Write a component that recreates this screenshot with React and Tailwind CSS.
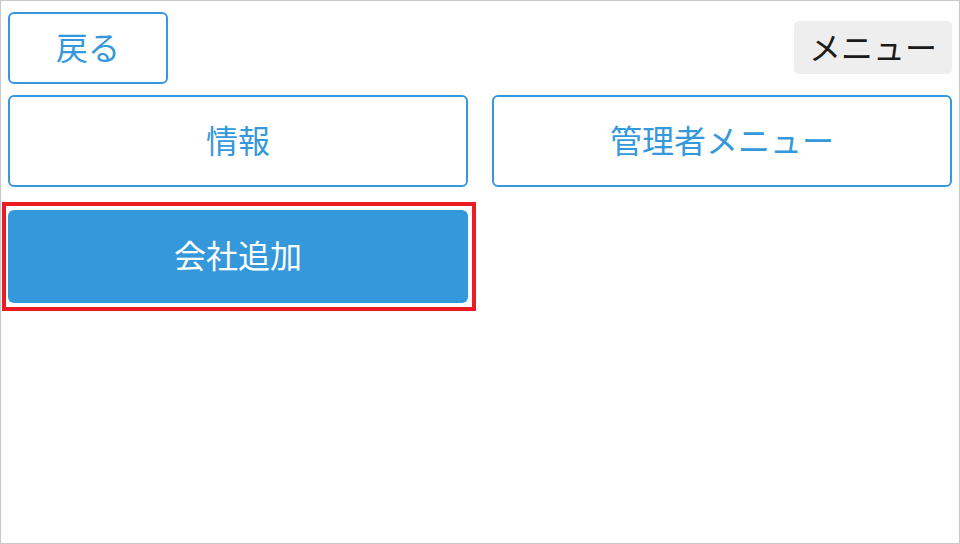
export default function App() {
  const font = { fontFamily: '"Noto Sans CJK JP", "Noto Sans", sans-serif' };
  return (
    <div className="w-[960px] h-[544px] border border-[#c8c8c8] bg-white box-border overflow-hidden" style={font}>
      <div className="flex flex-col px-[7px] pt-[11px]">
        <div className="flex items-start justify-between">
          <button className="w-[160px] h-[72px] pb-[5px] border-2 border-[#3498db] rounded-[6px] text-[#3498db] text-[32px] flex items-center justify-center bg-white">
            戻る
          </button>
          <button className="mt-[9px] w-[158px] h-[53px] pb-[4px] bg-[#eeeeee] rounded-[5px] text-[#1a1a1a] text-[32px] flex items-center justify-center">
            メニュー
          </button>
        </div>
        <div className="mt-[11px] grid grid-cols-2 gap-[24px]">
          <button className="h-[92px] pb-[5px] border-2 border-[#3498db] rounded-[6px] text-[#3498db] text-[32px] flex items-center justify-center bg-white">
            情報
          </button>
          <button className="h-[92px] pb-[5px] border-2 border-[#3498db] rounded-[6px] text-[#3498db] text-[32px] flex items-center justify-center bg-white">
            管理者メニュー
          </button>
        </div>
        <div className="mt-[15px] ml-[-6px] w-[474px] border-4 border-[#ed1c24] pl-[2px] pr-[4px] pt-[4px] pb-[4px]">
          <button className="w-full h-[93px] pb-[5px] bg-[#3498db] rounded-[6px] text-white text-[32px] flex items-center justify-center">
            会社追加
          </button>
        </div>
      </div>
    </div>
  );
}
